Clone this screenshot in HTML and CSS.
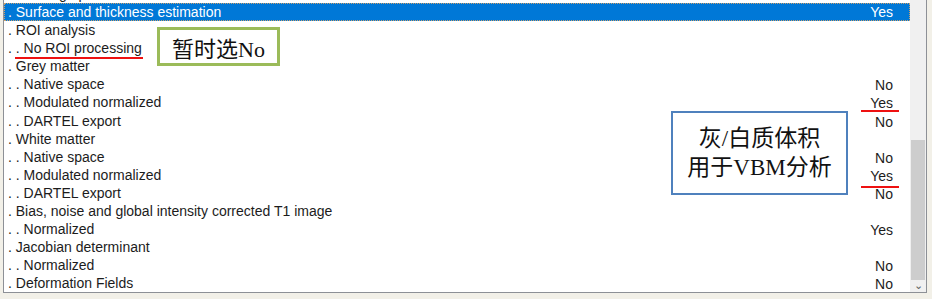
FILE: index.html
```
<!DOCTYPE html>
<html lang="zh">
<head>
  <meta charset="UTF-8">
  <meta name="viewport" content="width=device-width, initial-scale=1.0">
  <link rel="stylesheet" href="styles.css">
</head>
<body>
  <div class="page">
    <div class="listbox">
      <div class="rows">
        <div class="row"><span>. . Writing options</span><span></span></div>
        <div class="row selected"><span>. Surface and thickness estimation</span><span>Yes</span></div>
        <div class="row"><span>. ROI analysis</span><span></span></div>
        <div class="row"><span>. . No ROI processing</span><span></span></div>
        <div class="row"><span>. Grey matter</span><span></span></div>
        <div class="row"><span>. . Native space</span><span class="value">No</span></div>
        <div class="row"><span>. . Modulated normalized</span><span class="value">Yes</span></div>
        <div class="row"><span>. . DARTEL export</span><span class="value">No</span></div>
        <div class="row"><span>. White matter</span><span></span></div>
        <div class="row"><span>. . Native space</span><span class="value">No</span></div>
        <div class="row"><span>. . Modulated normalized</span><span class="value">Yes</span></div>
        <div class="row"><span>. . DARTEL export</span><span class="value">No</span></div>
        <div class="row"><span>. Bias, noise and global intensity corrected T1 image</span><span></span></div>
        <div class="row"><span>. . Normalized</span><span class="value">Yes</span></div>
        <div class="row"><span>. Jacobian determinant</span><span></span></div>
        <div class="row"><span>. . Normalized</span><span class="value">No</span></div>
        <div class="row"><span>. Deformation Fields</span><span class="value">No</span></div>
      </div>
      <div class="scrollbar">
        <div class="thumb"></div>
        <div class="arrow">&#8964;</div>
      </div>
    </div>

    <!-- annotations drawn over the list -->
    <div class="underline line-roi"></div>
    <div class="underline line-grey"></div>
    <div class="underline line-white"></div>
    <div class="note note-green">暂时选No</div>
    <div class="note note-blue">灰/白质体积<br>用于VBM分析</div>
  </div>
</body>
</html>
```

FILE: styles.css
```
body {
  margin: 0;
  background: #f2f0e8;
  font-family: 'Liberation Sans', Arial, sans-serif;
}

.page {
  position: relative;
  width: 932px;
  height: 299px;
  overflow: hidden;
}

.listbox {
  display: flex;
  margin-left: 3px;
  width: 922px;
  height: 292px;
  background: #ffffff;
  border: 1px solid #8d9096;
  border-top: none;
  overflow: hidden;
}

.rows {
  flex: 1;
  margin-top: -15px;
}

.row {
  display: flex;
  justify-content: space-between;
  height: 18.08px;
  line-height: 18px;
  padding: 0 17px 0 4px;
  font-size: 14px;
  color: #1c1c1c;
  white-space: nowrap;
}

.row .value {
  padding-top: 1px;
}

.row.selected {
  background: #0078d7;
  color: #ffffff;
  outline: 1px dotted #c8a070;
  outline-offset: -1px;
}

.scrollbar {
  position: relative;
  width: 16px;
  background: #f0f0f0;
}

.thumb {
  position: absolute;
  left: 1px;
  right: 1px;
  top: 140px;
  height: 140px;
  background: #cdcdcd;
}

.arrow {
  position: absolute;
  left: 0;
  right: 0;
  bottom: 2px;
  text-align: center;
  font-size: 11px;
  color: #606060;
  line-height: 10px;
}

.underline {
  position: absolute;
  height: 2px;
  background: #ee1111;
}

.line-roi {
  left: 15px;
  top: 57px;
  width: 128px;
}

.line-grey {
  left: 861px;
  top: 110px;
  width: 38px;
}

.line-white {
  left: 861px;
  top: 186px;
  width: 38px;
}

.note {
  position: absolute;
  display: flex;
  align-items: center;
  justify-content: center;
  text-align: center;
  background: #ffffff;
  color: #111111;
  font-family: 'Liberation Serif', 'Noto Sans CJK SC', serif;
  box-sizing: border-box;
}

.note-green {
  left: 157px;
  top: 27px;
  width: 123px;
  height: 39px;
  border: 3px solid #9bbb59;
  font-size: 22px;
}

.note-blue {
  left: 671px;
  top: 111px;
  width: 177px;
  height: 84px;
  border: 2px solid #4f81bd;
  font-size: 23px;
  line-height: 29px;
}
```
